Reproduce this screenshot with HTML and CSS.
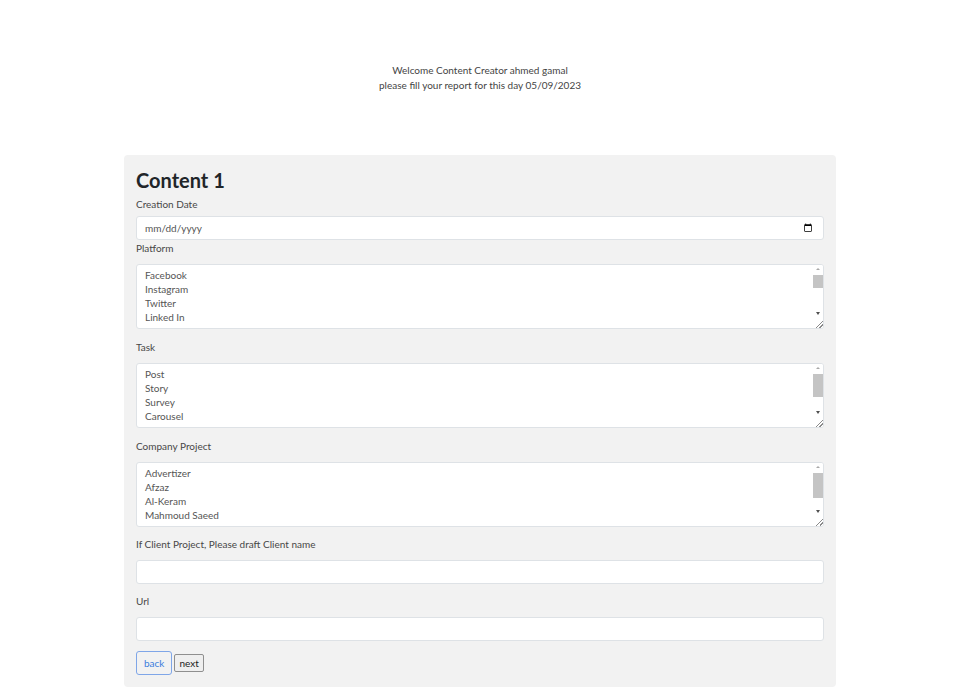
FILE: index.html
```html
<!DOCTYPE html>
<html>
<head>
<meta charset="utf-8">
<link rel="stylesheet" href="styles.css">
</head>
<body>
<header class="welcome">
  <div>Welcome Content Creator ahmed gamal</div>
  <div>please fill your report for this day 05/09/2023</div>
</header>
<main class="card">
  <h2 class="title">Content 1</h2>
  <label class="lbl lbl-first">Creation Date</label>
  <input class="field date" type="date">
  <label class="lbl lbl-tight">Platform</label>
  <div class="multi" role="listbox" aria-multiselectable="true">
    <div class="opt">Facebook</div><div class="opt">Instagram</div><div class="opt">Twitter</div><div class="opt">Linked In</div>
    <div class="sbar"><div class="sb-up"></div><div class="sb-track"><div class="sb-thumb" style="height:13px"></div></div><div class="sb-down"></div><div class="sb-corner"></div></div>
  </div>
  <label class="lbl">Task</label>
  <div class="multi" role="listbox" aria-multiselectable="true">
    <div class="opt">Post</div><div class="opt">Story</div><div class="opt">Survey</div><div class="opt">Carousel</div>
    <div class="sbar"><div class="sb-up"></div><div class="sb-track"><div class="sb-thumb" style="height:23px"></div></div><div class="sb-down"></div><div class="sb-corner"></div></div>
  </div>
  <label class="lbl">Company Project</label>
  <div class="multi" role="listbox" aria-multiselectable="true">
    <div class="opt">Advertizer</div><div class="opt">Afzaz</div><div class="opt">Al-Keram</div><div class="opt">Mahmoud Saeed</div>
    <div class="sbar"><div class="sb-up"></div><div class="sb-track"><div class="sb-thumb" style="height:25px"></div></div><div class="sb-down"></div><div class="sb-corner"></div></div>
  </div>
  <label class="lbl lbl-short">If Client Project, Please draft Client name</label>
  <input class="field" type="text">
  <label class="lbl lbl-short">Url</label>
  <input class="field" type="text">
  <div class="actions">
    <button class="btn-back" type="button">back</button>
    <button class="btn-next" type="button">next</button>
  </div>
</main>
</body>
</html>
```
FILE: styles.css
```css
html, body {
  margin: 0;
  padding: 0;
  background: #ffffff;
}
body {
  font-family: Lato, "Noto Sans", sans-serif;
  font-size: 10px;
  color: #444;
}
.welcome {
  padding-top: 63px;
  height: 92px;
  text-align: center;
  line-height: 15px;
  font-size: 10px;
}
.card {
  width: 712px;
  margin: 0 auto;
  box-sizing: border-box;
  background: #f2f2f2;
  border-radius: 4px;
  padding: 12px 12px 12px;
  display: flex;
  flex-direction: column;
}
.title {
  margin: 0;
  font-size: 20px;
  font-weight: 700;
  line-height: 26px;
  color: #212529;
}
.lbl {
  display: block;
  line-height: 15px;
  margin-top: 11px;
  margin-bottom: 8px;
  font-weight: 400;
  color: #474747;
}
.lbl-first {
  margin-top: 4px;
  margin-bottom: 4px;
}
.lbl-tight {
  margin-top: 1px;
}
.lbl-short {
  margin-top: 10px;
}
.field {
  box-sizing: border-box;
  height: 24px;
  width: 100%;
  margin: 0;
  border: 1px solid #dee2e6;
  border-radius: 3px;
  background: #fff;
  padding: 0 8px;
  font-family: inherit;
  font-size: 10px;
  color: #555;
}
.date::-webkit-datetime-edit-text,
.date::-webkit-datetime-edit-month-field,
.date::-webkit-datetime-edit-day-field,
.date::-webkit-datetime-edit-year-field {
  padding: 0;
}
.date::-webkit-datetime-edit {
  color: #555;
}
.multi {
  position: relative;
  box-sizing: border-box;
  width: 100%;
  height: 65px;
  border: 1px solid #dee2e6;
  border-radius: 3px;
  background: #fff;
  padding: 3px 20px 3px 8px;
  font-size: 10px;
  color: #555;
  overflow: hidden;
}
.opt {
  line-height: 14px;
}
.sbar {
  position: absolute;
  top: 0;
  right: 0;
  bottom: 0;
  width: 10px;
  display: flex;
  flex-direction: column;
  background: #fff;
}
.sb-up,
.sb-down,
.sb-corner {
  flex: 0 0 10px;
  position: relative;
}
.sb-up::after {
  content: "";
  position: absolute;
  left: 3px;
  top: 3px;
  border-left: 2px solid transparent;
  border-right: 2px solid transparent;
  border-bottom: 2px solid #a8a8a8;
}
.sb-down::after {
  content: "";
  position: absolute;
  left: 3px;
  top: 4px;
  border-left: 2px solid transparent;
  border-right: 2px solid transparent;
  border-top: 3px solid #505050;
}
.sb-track {
  flex: 1;
  background: #fff;
}
.sb-thumb {
  background: #c4c4c4;
}
.sb-corner {
  background:
    linear-gradient(135deg, transparent 62%, #8a8a8a 62%, #8a8a8a 69%, transparent 69%, transparent 80%, #8a8a8a 80%, #8a8a8a 87%, transparent 87%);
}
.actions {
  display: flex;
  align-items: center;
  gap: 2px;
  margin-top: 10px;
}
.btn-back {
  height: 24px;
  padding: 0 7px;
  border: 1px solid #7fa6e8;
  border-radius: 3px;
  background: transparent;
  color: #3b7ddd;
  font-family: inherit;
  font-size: 10px;
  font-weight: 400;
}
.btn-next {
  height: 18px;
  padding: 0 4px;
  border: 1px solid #8f8f8f;
  border-radius: 2px;
  background: #efefef;
  color: #222;
  font-family: inherit;
  font-size: 10px;
  font-weight: 400;
}
```
